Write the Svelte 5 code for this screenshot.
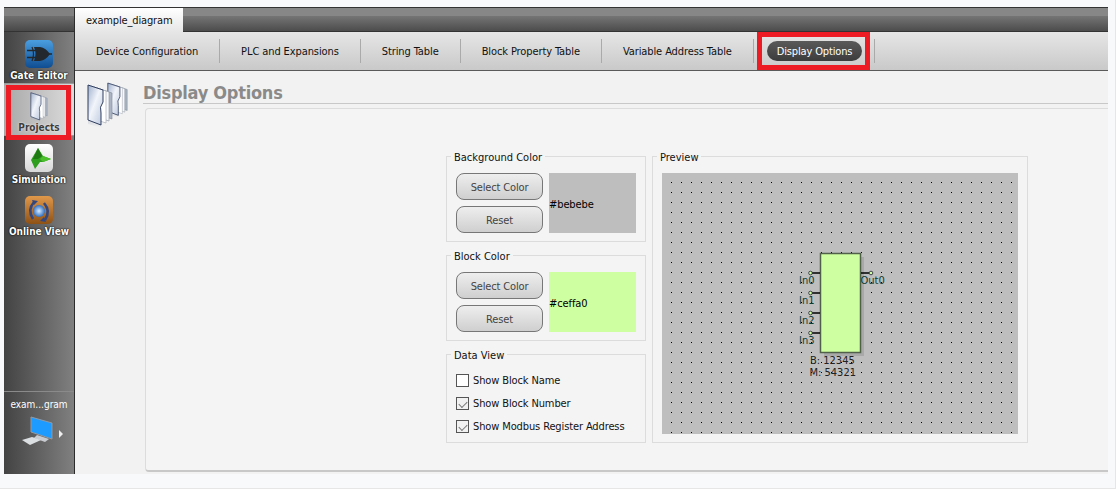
<script>
	const tabs = ['Device Configuration', 'PLC and Expansions', 'String Table', 'Block Property Table', 'Variable Address Table'];
	const inputs = ['In0', 'In1', 'In2', 'In3'];
	const views = [
		{ label: 'Show Block Name', checked: false },
		{ label: 'Show Block Number', checked: true },
		{ label: 'Show Modbus Register Address', checked: true }
	];
	const colors = [
		{ title: 'Background Color', value: '#bebebe' },
		{ title: 'Block Color', value: '#ceffa0' }
	];
</script>

<svg class="defs" width="0" height="0" aria-hidden="true">
	<defs>
		<linearGradient id="cover" x1="0" y1="0" x2="1" y2="1">
			<stop offset="0" stop-color="#9fb0cc" />
			<stop offset=".45" stop-color="#f2f5fa" />
			<stop offset="1" stop-color="#b9c6dc" />
		</linearGradient>
		<linearGradient id="mirror" x1="0" y1="0" x2="0" y2="1">
			<stop offset="0" stop-color="#9aa6b8" stop-opacity=".35" />
			<stop offset="1" stop-color="#9aa6b8" stop-opacity="0" />
		</linearGradient>
	</defs>
</svg>

{#snippet folder(cls)}
	<svg class={cls} viewBox="0 0 26 44">
		<path d="M10 4 L25 9 L25 35 L10 30 Z" fill="#aab4c4" stroke="#7d8794" stroke-width=".6" />
		<path d="M7 3 L22 8 L22 37 L7 32 Z" fill="#f7f8fa" stroke="#8a93a0" stroke-width=".6" />
		<path d="M4 2 L19 7 L19 39 L4 34 Z" fill="#fff" stroke="#9aa2ae" stroke-width=".6" />
		<path d="M1 36 L15 41 L15 44 L1 40 Z" fill="url(#mirror)" />
		<path d="M1 1 L16 6 L16 18 Q12 23 14 29 L14 41 L1 36 Z" fill="url(#cover)" stroke="#2f3d5e" stroke-width="1" stroke-linejoin="round" />
	</svg>
{/snippet}

<div class="window">
	<aside class="sidebar">
		<div class="side-head"></div>

		<div class="nav-item">
			<svg class="nav-icon" viewBox="0 0 28 28">
				<defs>
					<linearGradient id="gate-blue" x1="0" y1="0" x2="0" y2="1">
						<stop offset="0" stop-color="#4a9ee0" />
						<stop offset="1" stop-color="#0f4d92" />
					</linearGradient>
				</defs>
				<rect width="28" height="28" rx="5" fill="url(#gate-blue)" />
				<path d="M9 7 H15 Q21 8 25 14 Q21 20 15 21 H9 Q12 14 9 7 Z" fill="#22282e" />
				<path d="M2 10.500 H11 M2 17.500 H11 M24 14 H27" stroke="#22282e" stroke-width="1.500" />
				<path d="M7 7 Q10 14 7 21" stroke="#22282e" stroke-width="1.200" fill="none" />
			</svg>
			<span class="nav-label">Gate Editor</span>
		</div>

		<div class="nav-item active">
			{@render folder('nav-folder')}
			<span class="nav-label">Projects</span>
			<span class="mark mark-side"></span>
		</div>

		<div class="nav-item">
			<svg class="nav-icon" viewBox="0 0 28 28">
				<defs>
					<linearGradient id="sim-white" x1="0" y1="0" x2="0" y2="1">
						<stop offset="0" stop-color="#fff" />
						<stop offset="1" stop-color="#d8d8d8" />
					</linearGradient>
				</defs>
				<rect width="28" height="28" rx="5" fill="url(#sim-white)" />
				<path d="M13 4 L18 12 L26 15 L18 18 L15 18 L10 25 L6 16 Z" fill="#2f9e1e" />
				<path d="M13 4 L17 12 L13 15 L8 15 Z" fill="#1f7a14" />
				<path d="M18 12 L26 15 L18 18 L15 15 Z" fill="#4cc02c" />
			</svg>
			<span class="nav-label">Simulation</span>
		</div>

		<div class="nav-item">
			<svg class="nav-icon" viewBox="0 0 28 28">
				<defs>
					<linearGradient id="online-brown" x1="0" y1="0" x2="0" y2="1">
						<stop offset="0" stop-color="#e0984a" />
						<stop offset="1" stop-color="#8e5216" />
					</linearGradient>
					<radialGradient id="online-globe">
						<stop offset="0" stop-color="#d8ecff" />
						<stop offset="1" stop-color="#2f6fc2" />
					</radialGradient>
				</defs>
				<rect width="28" height="28" rx="5" fill="url(#online-brown)" />
				<circle cx="14" cy="15" r="6" fill="url(#online-globe)" />
				<path d="M9 6 Q2 14 8 23 M19 7 Q26 15 20 24" stroke="#33477f" stroke-width="2.600" fill="none" />
				<path d="M7 4 L13 5 L9 9 Z M21 26 L15 25 L19 21 Z" fill="#33477f" />
			</svg>
			<span class="nav-label">Online View</span>
		</div>

		<div class="side-foot">
			<span class="foot-name">exam...gram</span>
			<div class="foot-icon">
				<svg class="monitor" viewBox="0 0 32 30">
					<path d="M10 1 L31 7 L31 23 L10 16 Z" fill="#1e9bff" stroke="#8f9aa5" stroke-width="1" />
					<path d="M16 19 L28 23 L24 26 L13 22 Z" fill="#c8ccd0" />
					<path d="M1 24 L11 21 L20 24 L9 29 Z" fill="#dcdfe2" />
				</svg>
				<span class="foot-arrow"></span>
			</div>
		</div>
	</aside>

	<main class="main">
		<div class="tabstrip">
			<div class="file-tab">example_diagram</div>
		</div>

		<nav class="toolbar">
			{#each tabs as tab}
				<span class="tool">{tab}</span>
			{/each}
			<span class="tool-current">
				<span class="pill">Display Options</span>
				<span class="mark mark-top"></span>
			</span>
			<span class="tool-end"></span>
		</nav>

		<section class="body">
			{@render folder('big-folder back')}
			{@render folder('big-folder front')}

			<div class="page">
				<h1>Display Options</h1>
				<div class="panel">
					<div class="left-col">
						{#each colors as color}
							<fieldset class="color-group">
								<legend>{color.title}</legend>
								<div class="color-row">
									<div class="color-btns">
										<button>Select Color</button>
										<button>Reset</button>
									</div>
									<div class="swatch" style={`background: ${color.value}`}>{color.value}</div>
								</div>
							</fieldset>
						{/each}

						<fieldset class="view-group">
							<legend>Data View</legend>
							{#each views as view}
								<label class="check">
									<input type="checkbox" checked={view.checked} />
									<span>{view.label}</span>
								</label>
							{/each}
						</fieldset>
					</div>

					<fieldset class="preview-group">
						<legend>Preview</legend>
						<svg class="canvas" width="356" height="261">
							<defs>
								<pattern id="dots" width="10" height="10" patternUnits="userSpaceOnUse">
									<rect x="9" y="9" width="1" height="1" fill="#000" />
								</pattern>
							</defs>
							<rect width="356" height="261" fill="#bebebe" />
							<rect width="356" height="261" fill="url(#dots)" />

							<rect x="162" y="84" width="40" height="99" fill="#a9a9a9" />
							<rect x="158.500" y="80.500" width="40" height="99" fill="#ceffa0" stroke="#50604a" stroke-width="1.500" />

							{#each inputs as pin, i}
								<path d={`M150 ${100 + i * 20} H158`} stroke="#000" stroke-width="1.500" />
								<circle cx="148.500" cy={100 + i * 20} r="1.800" fill="#ceffa0" stroke="#223" stroke-width=".8" />
								<text class="pin" x="137" y={111 + i * 20}>{pin}</text>
							{/each}
							<path d="M199 100 H207" stroke="#000" stroke-width="1.500" />
							<circle cx="209" cy="100" r="1.800" fill="#ceffa0" stroke="#223" stroke-width=".8" />
							<text class="pin" x="198.500" y="111">Out0</text>

							<text class="num" x="148" y="191">B: 12345</text>
							<text class="num" x="147.500" y="203">M: 54321</text>
						</svg>
					</fieldset>
				</div>
			</div>
		</section>
	</main>
</div>

<style>
	:global(body) {
		margin: 0;
		height: 489px;
		box-sizing: border-box;
		overflow: hidden;
		background: #f8f9fb;
		border-right: 1px solid #e6e6e6;
		border-bottom: 1px solid #e6e6e6;
	}

	.defs {
		position: absolute;
	}

	.window {
		display: flex;
		width: 1104px;
		height: 466px;
		margin: 7px 0 0 4px;
		border-top: 1px solid #333;
		font-family: 'DejaVu Sans Condensed', 'DejaVu Sans', sans-serif;
		font-stretch: condensed;
		font-size: 11px;
		color: #111;
	}

	.sidebar {
		position: relative;
		display: flex;
		flex-direction: column;
		flex: none;
		width: 70px;
		background: linear-gradient(to right, #434343, #808080);
		border-right: 1px solid #2c2c2c;
	}

	.side-head {
		height: 23px;
		background: linear-gradient(#818181 0 8px, #6f6f6f 8px, #484848);
		border-bottom: 1px solid #333;
	}

	.nav-item {
		position: relative;
		display: flex;
		flex-direction: column;
		align-items: center;
		height: 52px;
		padding-top: 8px;
		box-sizing: border-box;
		border-bottom: 1px solid #9a9a9a;
	}

	.nav-item:nth-child(n + 4) {
		border-bottom: 0;
	}

	.nav-item.active {
		background: linear-gradient(to right, #a8a8a8, #dcdcdc);
	}

	.nav-icon {
		width: 28px;
		height: 28px;
	}

	:global(.nav-folder) {
		width: 18px;
		height: 30px;
	}

	.nav-label {
		margin-top: 1px;
		font-size: 10px;
		line-height: 14px;
		font-weight: 700;
		color: #fff;
		text-shadow: 0 0 2px #000, 0 0 1px #000;
		white-space: nowrap;
	}

	.active .nav-label {
		margin-top: -1px;
		color: #3d3d3d;
		text-shadow: 0 0 2px #fff;
	}

	.mark {
		position: absolute;
		box-sizing: border-box;
		border: 5px solid #ed1c24;
		pointer-events: none;
	}

	.mark-side {
		left: 2px;
		top: 1px;
		width: 65px;
		height: 55px;
	}

	.side-foot {
		margin-top: auto;
		display: flex;
		flex-direction: column;
		align-items: center;
		height: 83px;
		padding-top: 5px;
		box-sizing: border-box;
		border-top: 1px solid #8a8a8a;
	}

	.foot-name {
		color: #fff;
		font-size: 10px;
		line-height: 15px;
	}

	.foot-icon {
		position: relative;
		display: flex;
		align-items: center;
		gap: 6px;
		margin: 4px 0 0 6px;
	}

	.monitor {
		width: 32px;
		height: 30px;
	}

	.foot-arrow {
		margin-top: 6px;
		border-left: 4px solid #eee;
		border-top: 4px solid transparent;
		border-bottom: 4px solid transparent;
	}

	.main {
		display: flex;
		flex-direction: column;
		flex: 1;
		min-width: 0;
	}

	.tabstrip {
		height: 23px;
		background: linear-gradient(#878787 0 8px, #757575 8px, #4c4c4c);
		border-bottom: 1px solid #333;
	}

	.file-tab {
		width: 108px;
		height: 24px;
		box-sizing: border-box;
		padding-left: 11px;
		line-height: 25px;
		letter-spacing: -0.15px;
		background: linear-gradient(#fff, #e6e6e6);
	}

	.toolbar {
		display: flex;
		align-items: center;
		height: 38px;
		background: linear-gradient(#e6e6e6, #c9c9c9);
		border-bottom: 1px solid #5a5a5a;
	}

	.tool {
		padding: 2px 21px 0;
		line-height: 22px;
		letter-spacing: -0.1px;
		border-right: 1px solid #aaa;
		white-space: nowrap;
	}

	.tool-current {
		position: relative;
		display: flex;
		align-items: center;
		height: 38px;
		padding: 0 12px 0 13px;
	}

	.pill {
		padding: 1px 10px 0;
		border-radius: 10px;
		line-height: 19px;
		letter-spacing: -0.15px;
		color: #fff;
		background: linear-gradient(#5a5a5a, #3c3c3c);
		white-space: nowrap;
	}

	.mark-top {
		left: 3px;
		top: 0;
		width: 113px;
		height: 38px;
	}

	.tool-end {
		height: 24px;
		border-left: 1px solid #aaa;
	}

	.body {
		position: relative;
		flex: 1;
		display: flex;
		background: #f2f2f2;
		min-height: 0;
	}

	:global(.big-folder) {
		position: absolute;
	}

	:global(.big-folder.back) {
		left: 32px;
		top: 11px;
		width: 21px;
		height: 36px;
	}

	:global(.big-folder.front) {
		left: 12px;
		top: 13px;
		width: 26px;
		height: 44px;
	}

	.page {
		flex: 1;
		display: flex;
		flex-direction: column;
		margin-left: 68px;
		min-width: 0;
	}

	h1 {
		margin: 0;
		height: 33px;
		box-sizing: border-box;
		padding-top: 11px;
		font-size: 18px;
		line-height: 22px;
		letter-spacing: -0.25px;
		font-weight: 700;
		color: #8a8a8a;
		border-bottom: 1px solid #c8c8c8;
	}

	.panel {
		display: flex;
		align-items: flex-start;
		gap: 6px;
		flex: none;
		height: 364px;
		box-sizing: border-box;
		margin: 4px 0 0 2px;
		padding: 39px 0 0 300px;
		background: #f4f4f4;
		border: 1px solid #dcdcdc;
		border-right: 0;
		border-bottom: 2px solid #c8c8c8;
		border-radius: 4px 0 0 4px;
	}

	fieldset {
		box-sizing: border-box;
		min-width: 0;
		margin: 0;
		border: 1px solid #dcdcdc;
	}

	legend {
		margin-left: -5px;
		padding: 3px 3px 0;
		line-height: 14px;
	}

	.left-col {
		display: flex;
		flex-direction: column;
		gap: 5px;
		width: 200px;
	}

	.color-group {
		height: 94px;
		padding: 8px 9px 0;
	}

	.color-row {
		display: flex;
		gap: 6px;
	}

	.color-btns {
		display: flex;
		flex-direction: column;
		gap: 6px;
	}

	button {
		width: 87px;
		height: 27px;
		padding: 2px 0 0;
		border: 1px solid #777;
		border-radius: 8px;
		font: inherit;
		letter-spacing: -0.15px;
		color: #444;
		background: linear-gradient(#eee, #cfcfcf);
	}

	.swatch {
		display: flex;
		align-items: center;
		width: 87px;
		height: 60px;
		padding-top: 2px;
		box-sizing: border-box;
		letter-spacing: -0.1px;
		color: #000;
	}

	.view-group {
		height: 97px;
		padding: 6px 9px 0;
	}

	.check {
		display: flex;
		align-items: center;
		gap: 4px;
		height: 23px;
		letter-spacing: -0.12px;
	}

	.check input {
		appearance: none;
		position: relative;
		flex: none;
		width: 13px;
		height: 13px;
		margin: 0;
		background: #fff;
		border: 1px solid #555;
	}

	.check input:checked {
		background: #f1f1f1;
	}

	.check input:checked::after {
		content: '';
		position: absolute;
		left: 1.500px;
		top: -.500px;
		width: 7px;
		height: 4px;
		transform: translateY(3px) rotate(-45deg);
		border-left: 1.500px solid #777;
		border-bottom: 1.500px solid #777;
	}

	.preview-group {
		width: 376px;
		height: 295px;
		padding: 8px 9px 0;
	}

	.canvas {
		display: block;
	}

	.pin {
		font-size: 11px;
		fill: #0c3d33;
	}

	.num {
		font-size: 11px;
		fill: #222;
	}
</style>
